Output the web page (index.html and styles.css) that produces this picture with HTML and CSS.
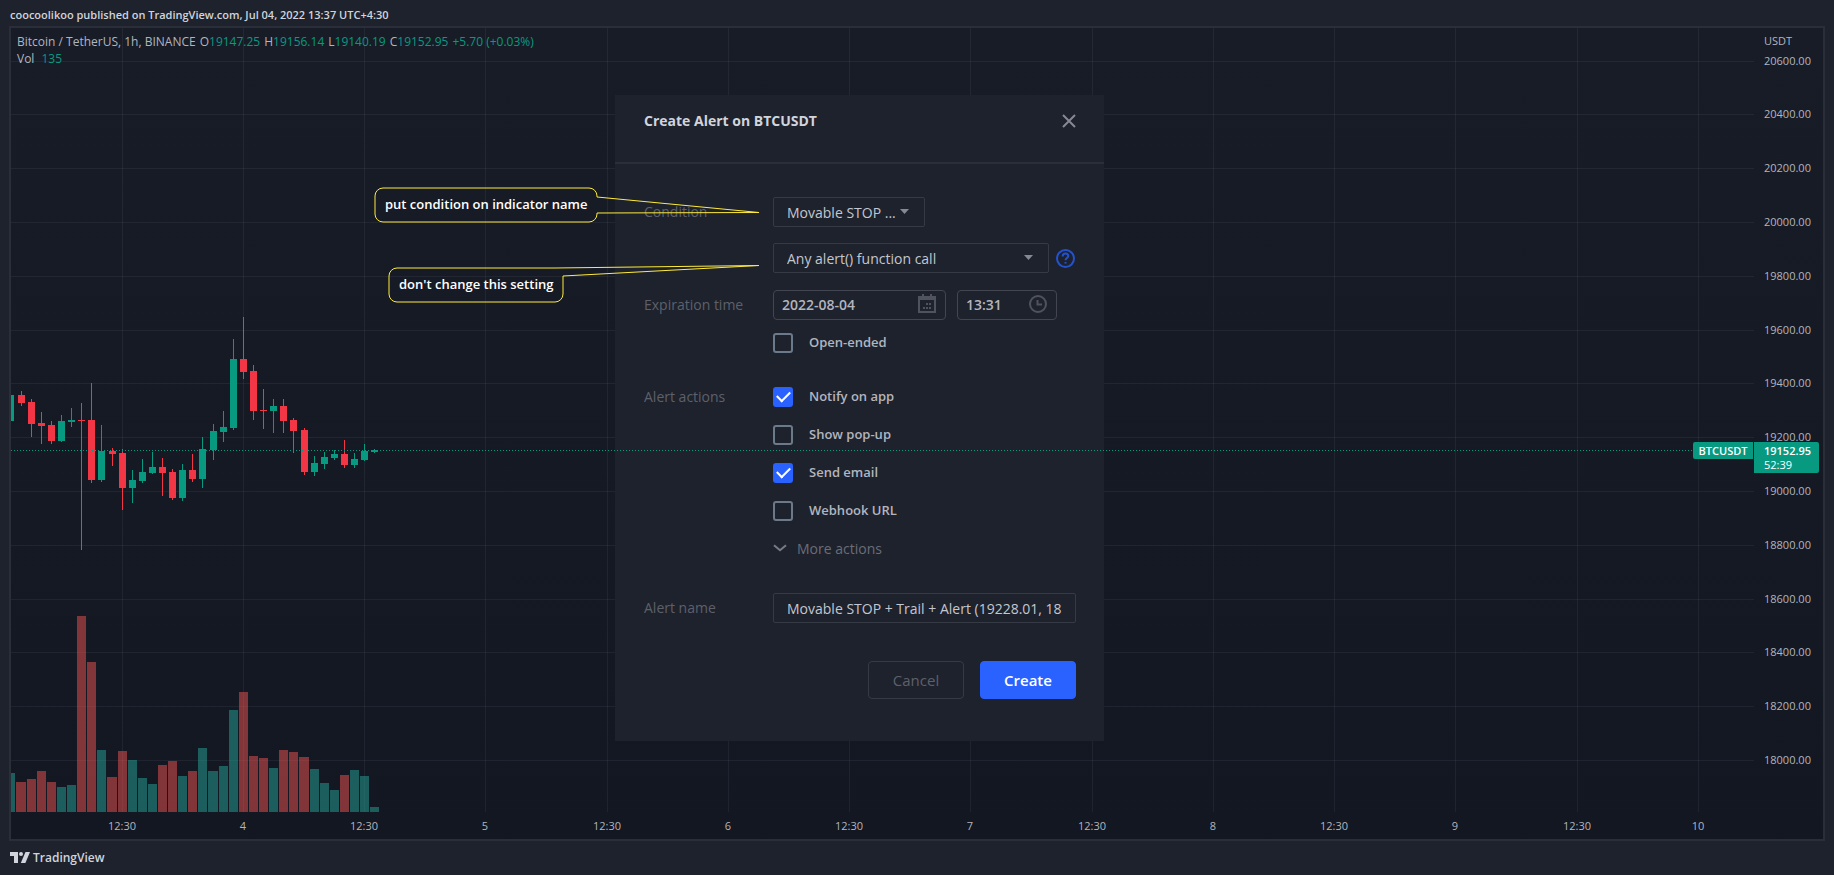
FILE: index.html
```html
<!DOCTYPE html>
<html lang="en">
<head>
  <meta charset="UTF-8" />
  <meta name="viewport" content="width=device-width, initial-scale=1.0"/>
  <title>BTCUSDT - TradingView</title>
  <link rel="stylesheet" href="styles.css">
</head>
<body>
  <header class="published">coocoolikoo published on TradingView.com, Jul 04, 2022 13:37 UTC+4:30</header>

  <main class="chart">
    <section class="plot">
      <svg class="plot-canvas" id="plot"></svg>

      <div class="legend">
        <div class="legend-row">
          <span>Bitcoin / TetherUS, 1h, BINANCE</span>
          <span>O<b>19147.25</b></span>
          <span>H<b>19156.14</b></span>
          <span>L<b>19140.19</b></span>
          <span>C<b>19152.95</b></span>
          <b>+5.70 (+0.03%)</b>
        </div>
        <div class="legend-row legend-volume"><span>Vol</span><b>135</b></div>
      </div>

      <form class="dialog">
        <div class="dialog-header">
          <h1>Create Alert on BTCUSDT</h1>
          <button type="button" class="close" aria-label="Close">
            <svg width="14" height="14" viewBox="0 0 14 14"><path d="M1 1l12 12M13 1L1 13"/></svg>
          </button>
        </div>

        <div class="dialog-body">
          <div class="row">
            <label class="row-label" for="condition">Condition</label>
            <div class="field-stack">
              <div class="select-box select-short">
                <select id="condition"><option>Movable STOP ...</option></select>
                <svg class="caret" width="9" height="5" viewBox="0 0 9 5"><path d="M0 0h9L4.5 5z"/></svg>
              </div>
              <div class="field-line">
                <div class="select-box select-long">
                  <select aria-label="Trigger"><option>Any alert() function call</option></select>
                  <svg class="caret" width="9" height="5" viewBox="0 0 9 5"><path d="M0 0h9L4.5 5z"/></svg>
                </div>
                <button type="button" class="help" aria-label="Help">
                  <svg width="20" height="20" viewBox="0 0 20 20">
                    <circle cx="9.5" cy="10.5" r="8.5"/>
                    <path d="M6.7 8.5V8.1a2.8 2.6 0 0 1 5.6 0c0 1.9-2.8 2-2.8 4.2"/>
                    <path d="M9.5 14v1.6"/>
                  </svg>
                </button>
              </div>
            </div>
          </div>

          <div class="row row-expiration">
            <label class="row-label" for="date">Expiration time</label>
            <div class="field-stack">
              <div class="field-line field-line-wide">
                <div class="picker picker-date">
                  <input type="text" id="date" value="2022-08-04">
                  <svg width="20" height="20" viewBox="0 0 20 20">
                    <path d="M2 4h16v14H2z"/>
                    <path class="solid" d="M1 2h18v4H1zM5 0h2v4H5zM13 0h2v4h-2zM9 9h2v2H9zM12 9h2v2h-2zM6 13h2v2H6zM9 13h2v2H9zM12 13h2v2h-2z"/>
                  </svg>
                </div>
                <div class="picker picker-time">
                  <input type="text" aria-label="Time" value="13:31">
                  <svg width="20" height="20" viewBox="0 0 20 20">
                    <circle cx="10" cy="10" r="8"/>
                    <path d="M9.5 6v4.5H14"/>
                  </svg>
                </div>
              </div>
              <label class="check"><input type="checkbox">Open-ended</label>
            </div>
          </div>

          <div class="row row-group">
            <span class="row-label row-label-check">Alert actions</span>
            <div class="check-list">
              <label class="check"><input type="checkbox" checked>Notify on app</label>
              <label class="check"><input type="checkbox">Show pop-up</label>
              <label class="check"><input type="checkbox" checked>Send email</label>
              <label class="check"><input type="checkbox">Webhook URL</label>
              <button type="button" class="more">
                <svg width="14" height="8" viewBox="0 0 14 8"><path d="M1 1.2l6 5 6-5"/></svg>
                More actions
              </button>
            </div>
          </div>

          <div class="row row-group">
            <label class="row-label" for="alertName">Alert name</label>
            <input type="text" class="text-input" id="alertName" value="Movable STOP + Trail + Alert (19228.01, 18">
          </div>

          <div class="actions">
            <button type="button" class="btn">Cancel</button>
            <button type="submit" class="btn btn-primary">Create</button>
          </div>
        </div>
      </form>

      <svg class="overlay">
        <line class="price-line" x1="0" y1="422.5" x2="1681" y2="422.5"/>
        <path class="callout" d="M372 160H578a8 8 0 0 1 8 8V169L748 184.5L586 185V186a8 8 0 0 1-8 8H372a8 8 0 0 1-8-8V168a8 8 0 0 1 8-8z"/>
        <text class="callout-text" x="374" y="181">put condition on indicator name</text>
        <path class="callout" d="M386 240H544L748 237.5L552 248V266a8 8 0 0 1-8 8H386a8 8 0 0 1-8-8V248a8 8 0 0 1 8-8z"/>
        <text class="callout-text" x="388" y="261">don't change this setting</text>
      </svg>

      <span class="symbol-tag">BTCUSDT</span>
    </section>

    <aside class="price-axis">
      <svg class="axis-canvas" id="priceAxis"></svg>
      <div class="price-tag"><strong>19152.95</strong><span>52:39</span></div>
    </aside>

    <div class="time-axis"><svg class="axis-canvas" id="timeAxis"></svg></div>
  </main>

  <footer class="brand">
    <svg width="20" height="11" viewBox="0 0 20 11">
      <path d="M0 0h8v11H4V4H0z"/>
      <circle cx="11" cy="2" r="2"/>
      <path d="M15.5 0H20l-4.6 11h-4.6z"/>
    </svg>
    TradingView
  </footer>

  <script src="chart.js"></script>
</body>
</html>
```

FILE: styles.css
```css
* {
  box-sizing: border-box;
}

body {
  display: flex;
  flex-direction: column;
  height: 100vh;
  margin: 0;
  overflow: hidden;
  background-color: #1e222d;
  color: #b2b5be;
  font-family: "Open Sans", "Noto Sans", sans-serif;
  font-size: 11px;
}

h1 {
  margin: 0;
}

button, input, select {
  font-family: inherit;
}

.published {
  height: 26px;
  padding: 0 10px;
  color: #d1d4dc;
  font-size: 11px;
  font-weight: 600;
  line-height: 29px;
}

/* chart frame */
.chart {
  flex: 1;
  display: grid;
  grid-template-columns: 1fr 69px;
  grid-template-rows: 1fr 27px;
  min-height: 0;
  margin: 0 9px;
  border: 2px solid #2a2e39;
  background: linear-gradient(#181c27, #131722);
}

.plot, .price-axis {
  position: relative;
  min-width: 0;
  min-height: 0;
}

.plot-canvas, .axis-canvas, .overlay {
  display: block;
  position: absolute;
  top: 0;
  left: 0;
  width: 100%;
  height: 100%;
}

.time-axis {
  position: relative;
}

.overlay {
  pointer-events: none;
}

.grid-line {
  fill: #f0f3fa;
  fill-opacity: 0.06;
}

.up {
  fill: #089981;
}

.down {
  fill: #f23645;
}

.vol-up {
  fill: #26a69a;
  fill-opacity: 0.5;
}

.vol-down {
  fill: #ef5350;
  fill-opacity: 0.5;
}

.axis-text {
  fill: #b2b5be;
  font-size: 11px;
}

.axis-text-mid {
  text-anchor: middle;
}

/* legend */
.legend {
  position: absolute;
  top: 5px;
  left: 6px;
  font-size: 12px;
  line-height: 17px;
}

.legend-row {
  display: flex;
  gap: 4px;
}

.legend-volume {
  gap: 7px;
}

.legend b {
  color: #089981;
  font-weight: 400;
}

/* current price */
.price-line {
  stroke: #089981;
  stroke-width: 1px;
  stroke-dasharray: 1 2;
}

.symbol-tag, .price-tag {
  position: absolute;
  top: 414px;
  background-color: #089981;
  color: #fff;
  font-size: 11px;
  font-weight: 600;
}

.symbol-tag {
  right: 1px;
  width: 60px;
  border-radius: 2px 0 0 2px;
  line-height: 17px;
  text-align: center;
}

.price-tag {
  display: flex;
  flex-direction: column;
  left: 0;
  width: 65px;
  height: 31px;
  padding: 2px 0 0 10px;
  border-radius: 0 2px 2px 0;
  line-height: 14px;
}

.price-tag strong {
  font-weight: 600;
}

.price-tag span {
  font-weight: 400;
}

/* callouts */
.callout {
  fill: none;
  stroke: #ffeb3b;
  stroke-width: 1px;
}

.callout-text {
  fill: #fff;
  font-size: 13px;
  font-weight: 600;
}

/* alert dialog */
.dialog {
  position: absolute;
  top: 67px;
  left: 604px;
  width: 489px;
  background-color: #1e222d;
  font-size: 14px;
}

.dialog-header {
  display: flex;
  justify-content: space-between;
  height: 69px;
  padding: 16px 28px 0 29px;
  border-bottom: 2px solid #2a2e39;
}

.dialog-header h1 {
  color: #d1d4dc;
  font-size: 14px;
  font-weight: 700;
  line-height: 20px;
}

.close, .help, .more {
  display: flex;
  align-items: center;
  padding: 0;
  border: 0;
  background: none;
}

.close {
  width: 14px;
  height: 20px;
}

.close svg {
  fill: none;
  stroke: #868993;
  stroke-width: 2px;
}

.dialog-body {
  padding: 33px 28px 42px 29px;
}

.row {
  display: grid;
  grid-template-columns: 129px 1fr;
}

.row-expiration {
  margin-top: 17px;
}

.row-group {
  margin-top: 34px;
}

.row-label {
  color: #5d606b;
  line-height: 30px;
}

.row-label-check {
  line-height: 20px;
}

.field-stack {
  display: flex;
  flex-direction: column;
  gap: 16px;
}

.row-expiration .field-stack {
  gap: 13px;
}

.field-line {
  display: flex;
  align-items: center;
  gap: 7px;
}

.field-line-wide {
  gap: 11px;
}

.select-box {
  position: relative;
}

.select-short {
  width: 152px;
}

.select-long {
  width: 276px;
}

.select-box select, .text-input {
  width: 100%;
  height: 30px;
  padding: 0 13px;
  border: 1px solid #363a45;
  border-radius: 2px;
  outline: 0;
  background-color: transparent;
  color: #c4c7d0;
  font-size: 14px;
  appearance: none;
}

.caret {
  position: absolute;
  top: 12px;
  right: 16px;
  fill: #868993;
  pointer-events: none;
}

.help {
  width: 20px;
}

.help svg {
  fill: none;
  stroke: #2451cc;
  stroke-width: 2px;
}

.picker {
  display: flex;
  align-items: center;
  height: 30px;
  padding: 0 8px 2px 8px;
  border: 1px solid #434651;
  border-radius: 4px;
}

.picker-date {
  width: 173px;
}

.picker-time {
  width: 100px;
}

.picker input {
  flex: 1;
  min-width: 0;
  padding: 0;
  border: 0;
  outline: 0;
  background: none;
  color: #b2b5be;
  font-size: 14px;
  font-weight: 600;
}

.picker svg {
  fill: none;
  stroke: #50535e;
  stroke-width: 2px;
}

.picker .solid {
  fill: #50535e;
  stroke: none;
}

.check-list {
  display: flex;
  flex-direction: column;
  gap: 18px;
}

.check {
  display: flex;
  gap: 16px;
  height: 20px;
  font-size: 13px;
  font-weight: 600;
  line-height: 18px;
}

.check input {
  display: grid;
  place-content: center;
  width: 20px;
  height: 20px;
  margin: 0;
  border: 2px solid #6a7a8a;
  border-radius: 3px;
  appearance: none;
}

.check input:checked {
  border-color: #2962ff;
  background-color: #2962ff;
}

.check input:checked::before {
  content: "";
  width: 11px;
  height: 6px;
  border: solid #fff;
  border-width: 0 0 2px 2px;
  transform: translateY(-2px) rotate(-45deg);
}

.more {
  gap: 10px;
  height: 20px;
  padding-bottom: 2px;
  color: #6a6d78;
  font-size: 14px;
}

.more svg {
  fill: none;
  stroke: #787b86;
  stroke-width: 2px;
}

.actions {
  display: flex;
  justify-content: flex-end;
  gap: 16px;
  margin-top: 38px;
}

.btn {
  width: 96px;
  height: 38px;
  border: 1px solid #363a45;
  border-radius: 4px;
  background: none;
  color: #5d606b;
  font-size: 15px;
}

.btn-primary {
  border-color: #2962ff;
  background-color: #2962ff;
  color: #fff;
  font-weight: 600;
}

/* footer */
.brand {
  display: flex;
  align-items: center;
  gap: 3px;
  height: 34px;
  padding: 0 10px 2px;
  color: #d1d4dc;
  font-size: 12px;
  font-weight: 600;
}

.brand svg {
  fill: #d1d4dc;
}
```

FILE: chart.js
```js
const SVG_NS = 'http://www.w3.org/2000/svg';

const BAR_STEP = 10.104;
const FIRST_BAR = -0.012;
const PRICE_STEP = 53.79;
const PRICE_TOP = 33.2;
const VOLUME_BASE = 784;

// high, body top, body bottom, low, volume, direction
const bars = [
  [360, 367, 393, 396, 39, 'up'],
  [363, 367, 375, 378, 30, 'down'],
  [371, 374, 396, 409, 33, 'down'],
  [384, 395, 398, 416, 41, 'down'],
  [393, 397, 413, 416, 30, 'down'],
  [387, 393, 413, 414, 25, 'up'],
  [380, 392, 394, 399, 27, 'up'],
  [375, 392, 393, 522, 196, 'down'],
  [355, 392, 452, 455, 150, 'down'],
  [397, 423, 452, 454, 62, 'up'],
  [420, 423, 426, 438, 35, 'down'],
  [421, 425, 460, 482, 61, 'down'],
  [442, 452, 460, 475, 52, 'up'],
  [431, 444, 453, 455, 34, 'up'],
  [424, 439, 445, 446, 28, 'up'],
  [430, 439, 445, 468, 47, 'down'],
  [441, 444, 470, 472, 51, 'down'],
  [436, 442, 470, 473, 36, 'up'],
  [426, 442, 451, 454, 41, 'down'],
  [409, 421, 451, 460, 64, 'up'],
  [396, 403, 422, 432, 41, 'up'],
  [383, 399, 404, 414, 46, 'up'],
  [311, 331, 400, 402, 102, 'up'],
  [289, 331, 344, 351, 120, 'down'],
  [337, 343, 383, 392, 56, 'down'],
  [361, 382, 383, 401, 54, 'down'],
  [371, 378, 383, 405, 44, 'up'],
  [371, 378, 393, 405, 62, 'down'],
  [390, 392, 403, 425, 60, 'down'],
  [400, 402, 444, 447, 55, 'down'],
  [428, 435, 444, 448, 43, 'up'],
  [424, 429, 436, 441, 29, 'up'],
  [422, 426, 430, 432, 22, 'up'],
  [412, 426, 437, 440, 37, 'down'],
  [425, 431, 437, 440, 42, 'up'],
  [416, 423, 432, 433, 36, 'up'],
  [421, 422, 424, 425, 5, 'up']
];

const timeLabels = ['12:30', '4', '12:30', '5', '12:30', '6', '12:30', '7', '12:30', '8', '12:30', '9', '12:30', '10'];

const plot = document.getElementById('plot');
const priceAxis = document.getElementById('priceAxis');
const timeAxis = document.getElementById('timeAxis');

function addRect(x, y, width, height, className) {
  const rect = document.createElementNS(SVG_NS, 'rect');
  rect.setAttribute('x', x);
  rect.setAttribute('y', y);
  rect.setAttribute('width', width);
  rect.setAttribute('height', height);
  rect.setAttribute('class', className);
  plot.appendChild(rect);
}

function addText(parent, x, y, value, className) {
  const text = document.createElementNS(SVG_NS, 'text');
  text.setAttribute('x', x);
  text.setAttribute('y', y);
  text.setAttribute('class', className);
  text.textContent = value;
  parent.appendChild(text);
}

function barX(index) {
  return Math.floor(FIRST_BAR + index * BAR_STEP);
}

function drawGrid() {
  timeLabels.forEach((label, i) => {
    const x = barX(11 + i * 12);
    addRect(x, 0, 1, '100%', 'grid-line');
    addText(timeAxis, x, 18, label, 'axis-text axis-text-mid');
  });

  for (let i = 0; i < 14; i++) {
    const y = Math.floor(PRICE_TOP + i * PRICE_STEP);
    addRect(0, y, '100%', 1, 'grid-line');
    addText(priceAxis, 10, y + 4, (20600 - i * 200).toFixed(2), 'axis-text');
  }
  addText(priceAxis, 10, 17, 'USDT', 'axis-text');
}

function drawBars() {
  bars.forEach(([high, top, bottom, low, volume, direction], i) => {
    const x = barX(i);
    const left = barX(i - 1) + 6;
    addRect(left, VOLUME_BASE - volume, x + 5 - left, volume, 'vol-' + direction);
    addRect(x, high, 1, low - high, direction);
    addRect(x - 3, top, 7, bottom - top, direction);
  });
}

drawGrid();
drawBars();
```
